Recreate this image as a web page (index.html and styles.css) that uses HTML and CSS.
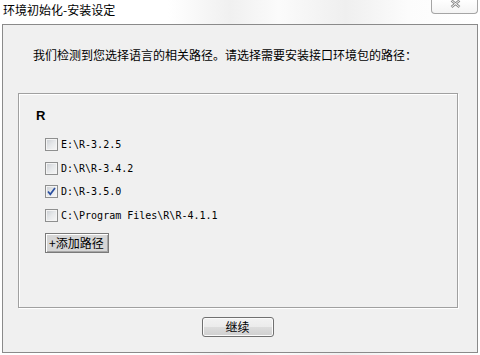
FILE: index.html
```html
<!DOCTYPE html>
<html>
<head>
<meta charset="utf-8">
<link rel="stylesheet" href="styles.css">
</head>
<body>
<div class="titlebar">
  <span class="title">环境初始化-安装设定</span>
  <div class="close">
    <svg width="11" height="8" viewBox="0 0 11 8"><path d="M1.5 0.5 L9.5 7 M9.5 0.5 L1.5 7" stroke="#8a8a8a" stroke-width="2.6" fill="none"/><path d="M1.5 0.5 L9.5 7 M9.5 0.5 L1.5 7" stroke="#fff" stroke-width="0.9" fill="none"/></svg>
  </div>
</div>
<div class="window">
  <p class="intro">我们检测到您选择语言的相关路径。请选择需要安装接口环境包的路径：</p>
  <div class="group">
    <div class="lang">R</div>
    <div class="paths">
      <div class="row"><span class="cb"></span><span class="path">E:\R-3.2.5</span></div>
      <div class="row"><span class="cb"></span><span class="path">D:\R\R-3.4.2</span></div>
      <div class="row"><span class="cb checked"><svg width="11" height="11" viewBox="0 0 11 11"><path d="M2 5.5 L4.3 8.3 L9 2" stroke="#2a4fa0" stroke-width="1.7" fill="none"/></svg></span><span class="path">D:\R-3.5.0</span></div>
      <div class="row"><span class="cb"></span><span class="path">C:\Program Files\R\R-4.1.1</span></div>
      <button class="add">+添加路径</button>
    </div>
  </div>
  <div class="footer"><button class="continue">继续</button></div>
</div>
</body>
</html>
```
FILE: styles.css
```css
html, body {
  margin: 0;
  padding: 0;
}
body {
  width: 480px;
  height: 355px;
  overflow: hidden;
  background: linear-gradient(90deg, #ffffff 0%, #ffffff 35%, #f0f0f0 48%, #fbfbfb 58%, #efefef 72%, #fcfcfc 85%, #ffffff 100%);
  font-family: "Noto Sans CJK SC", sans-serif;
  font-size: 12px;
  color: #000;
}
.titlebar {
  height: 24px;
  display: flex;
  justify-content: space-between;
  align-items: flex-start;
}
.title {
  padding: 2px 0 0 3px;
  line-height: 16px;
}
.close {
  width: 47px;
  height: 14px;
  margin-right: 2px;
  box-sizing: border-box;
  border: 1px solid #a5a5a5;
  border-top: none;
  border-radius: 0 0 4px 4px;
  background: linear-gradient(#ffffff, #f4f4f4);
  display: flex;
  justify-content: center;
  align-items: flex-start;
  padding-left: 1px;
}
.close svg {
  display: block;
}
.window {
  margin-left: 2px;
  width: 476px;
  height: 329px;
  box-sizing: border-box;
  border: 1px solid #8a8a8a;
  background: #f0f0f0;
  display: flex;
  flex-direction: column;
}
.intro {
  margin: 0;
  padding: 22px 0 0 30px;
  line-height: 16px;
}
.group {
  margin: 30px 0 0 15px;
  width: 440px;
  height: 215px;
  box-sizing: border-box;
  border: 1px solid #a0a0a0;
  box-shadow: inset 1px 1px 0 #ffffff, 1px 1px 0 #ffffff;
  padding: 14px 0 0 17px;
}
.lang {
  font-family: "Liberation Sans", sans-serif;
  font-weight: bold;
  font-size: 13px;
  line-height: 16px;
}
.paths {
  margin: 14px 0 0 9px;
  display: flex;
  flex-direction: column;
  align-items: flex-start;
  gap: 10.67px;
}
.row {
  display: flex;
  align-items: center;
  height: 13px;
  gap: 3px;
}
.cb {
  width: 13px;
  height: 13px;
  box-sizing: border-box;
  border: 1px solid #8e8f8f;
  background: linear-gradient(135deg, #c9cdd2 0%, #e6e8ea 50%, #f7f7f7 100%);
  box-shadow: inset 0 0 0 1px #f4f4f4;
  display: flex;
  align-items: center;
  justify-content: center;
}
.cb svg {
  display: block;
}
.path {
  font-family: "DejaVu Sans Mono", "Liberation Mono", monospace;
  font-size: 10px;
  line-height: 13px;
  white-space: pre;
}
.add {
  margin: 0;
  width: 64px;
  height: 20px;
  box-sizing: border-box;
  padding: 0 0 0 3px;
  text-align: left;
  font-family: "Noto Sans CJK SC", sans-serif;
  font-size: 12px;
  line-height: 18px;
  color: #000;
  background: #d6d6d6;
  border: 1px solid #7a7a7a;
  box-shadow: inset 1px 1px 0 #ffffff, inset -1px -1px 0 #a6a6a6;
}
.footer {
  margin-top: 9px;
  display: flex;
  justify-content: center;
  padding-right: 5px;
}
.continue {
  margin: 0;
  width: 72px;
  height: 20px;
  box-sizing: border-box;
  padding: 0;
  font-family: "Noto Sans CJK SC", sans-serif;
  font-size: 12px;
  line-height: 18px;
  color: #000;
  border: 1px solid #707070;
  border-radius: 3px;
  background: linear-gradient(#f2f2f2 0%, #ebebeb 50%, #dddddd 50%, #cfcfcf 100%);
  box-shadow: inset 0 0 0 1px #fbfbfb;
}
```
